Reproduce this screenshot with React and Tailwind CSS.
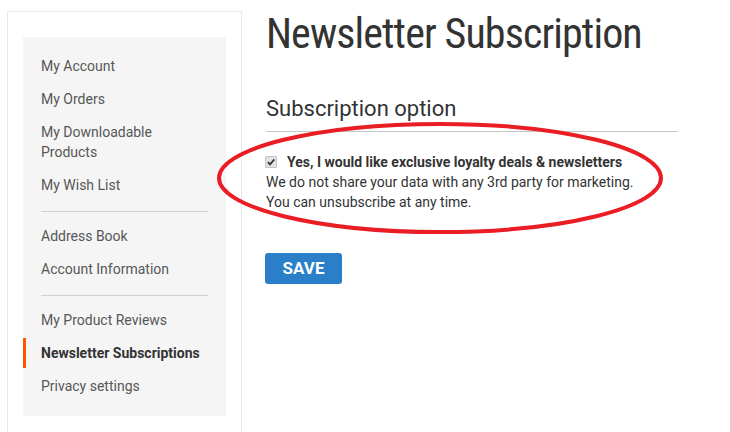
import React, { useState } from "react";

const navGroups = [
  ["My Account", "My Orders", "My Downloadable Products", "My Wish List"],
  ["Address Book", "Account Information"],
  ["My Product Reviews", "Newsletter Subscriptions", "Privacy settings"],
];

function Sidebar() {
  const active = "Newsletter Subscriptions";
  return (
    <div className="w-[235px] shrink-0 border border-b-0 border-[#e8e8e8] px-[15px] pt-[25px] pb-[40px]">
      <div className="bg-[#f5f5f5] pt-[14px] pb-[15px]">
        {navGroups.map((group, gi) => (
          <div key={gi}>
            {gi > 0 && <div className="mx-[18px] mt-[11px] mb-[9px] h-px bg-[#d1d1d1]" />}
            <ul className="flex flex-col gap-[3px]">
              {group.map((item) => (
                <li
                  key={item}
                  className={
                    item === active
                      ? "border-l-[3px] border-[#ff5501] py-[5px] pl-[15px] pr-[18px] text-[14px] leading-[20px] font-bold text-[#333]"
                      : "border-l-[3px] border-transparent py-[5px] pl-[15px] pr-[18px] text-[14px] leading-[20px] text-[#575757]"
                  }
                >
                  {item === "My Downloadable Products" ? (
                    <>
                      My Downloadable
                      <br />
                      Products
                    </>
                  ) : (
                    item
                  )}
                </li>
              ))}
            </ul>
          </div>
        ))}
      </div>
    </div>
  );
}

export default function App() {
  const [checked, setChecked] = useState(true);

  return (
    <div className="relative h-[432px] w-[730px] overflow-hidden bg-white font-['Roboto','Liberation_Sans',sans-serif] text-[#333]">
      <div className="flex gap-[24px] pl-[7px] pt-[11px]">
        <Sidebar />

        <div className="w-[412px]">
          <h1 className="mt-[-2px] text-[42px] leading-[50px] font-normal tracking-[-0.9px] text-[#333] [font-stretch:condensed]">
            Newsletter Subscription
          </h1>

          <div className="mt-[36px] border-b border-[#c6c6c6] pb-[8px]">
            <h2 className="text-[22px] leading-[28px] font-normal text-[#333]">Subscription option</h2>
          </div>

          <div className="mt-[20px] text-[14px] leading-[20px]">
            <label className="flex items-center">
              <span
                onClick={() => setChecked(!checked)}
                className="mr-[10px] ml-[-1px] flex h-[12px] w-[12px] items-center justify-center rounded-[1px] border border-[#c4c4c4] bg-[#e3e3e3]"
              >
                {checked && (
                  <svg width="10" height="10" viewBox="0 0 10 10">
                    <path d="M1.8 5.2 L4 7.4 L8.3 2.4" fill="none" stroke="#333" strokeWidth="1.7" />
                  </svg>
                )}
              </span>
              <span className="font-bold text-[#333]">Yes, I would like exclusive loyalty deals &amp; newsletters</span>
            </label>
            <p className="text-[#333]">
              We do not share your data with any 3rd party for marketing.
              <br />
              You can unsubscribe at any time.
            </p>
          </div>

          <button className="mt-[41px] ml-[-1px] h-[31px] w-[77px] rounded-[3px] bg-[#2b7fc9] text-[17px] font-bold text-white">
            SAVE
          </button>
        </div>
      </div>

      <svg className="pointer-events-none absolute left-[216px] top-[120px]" width="450" height="116" viewBox="0 0 450 116">
        <ellipse cx="224" cy="58" rx="221" ry="54" fill="none" stroke="#ea1c24" strokeWidth="4" />
      </svg>
    </div>
  );
}
